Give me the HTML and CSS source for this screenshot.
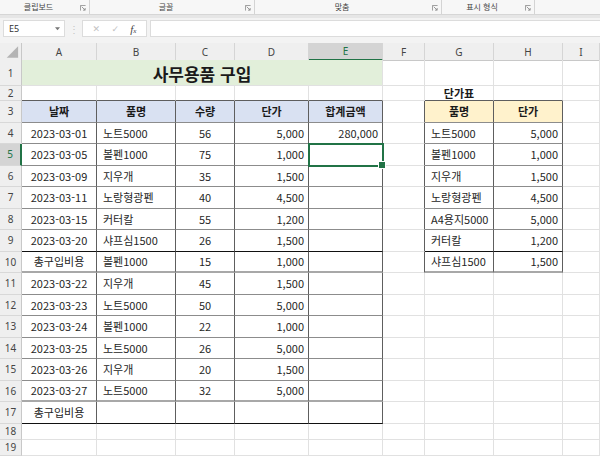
FILE: index.html
```html
<!DOCTYPE html>
<html lang="ko">
<head>
<meta charset="utf-8">
<title>사무용품 구입</title>
<link rel="stylesheet" href="styles.css">
</head>
<body>
<div class="ribbon">
  <div class="grp rg1"><span class="grp-label">클립보드</span><svg class="launch" viewBox="0 0 7 7"><path d="M0.5 6.5V0.5H6.5M2 2L6 6M6 3.5V6H3.5"/></svg></div>
  <div class="grp rg2"><span class="grp-label">글꼴</span><svg class="launch" viewBox="0 0 7 7"><path d="M0.5 6.5V0.5H6.5M2 2L6 6M6 3.5V6H3.5"/></svg></div>
  <div class="grp rg3"><span class="grp-label">맞춤</span><svg class="launch" viewBox="0 0 7 7"><path d="M0.5 6.5V0.5H6.5M2 2L6 6M6 3.5V6H3.5"/></svg></div>
  <div class="grp rg4"><span class="grp-label">표시 형식</span><svg class="launch" viewBox="0 0 7 7"><path d="M0.5 6.5V0.5H6.5M2 2L6 6M6 3.5V6H3.5"/></svg></div>
  <div class="grp rg5"></div>
</div>
<div class="strip"></div>
<div class="fbar">
  <div class="namebox"><span>E5</span><svg class="dd" viewBox="0 0 6 4"><path d="M0 0H6L3 3.5Z"/></svg></div>
  <div class="dots">⋮</div>
  <div class="fxbox"><span class="dis">✕</span><span class="dis">✓</span><span class="fx">f<small>x</small></span></div>
  <div class="finput"></div>
</div>

<div class="sheet">
  <div class="row colhead">
    <div class="ch corner"><svg viewBox="0 0 22 17"><path d="M19 3V15H7Z"/></svg></div>
    <div class="ch">A</div><div class="ch">B</div><div class="ch">C</div><div class="ch">D</div><div class="ch act">E</div><div class="ch">F</div><div class="ch">G</div><div class="ch">H</div><div class="ch">I</div>
  </div>

  <div class="row h26">
    <div class="c rh">1</div>
    <div class="c title">사무용품 구입</div>
    <div class="c"></div><div class="c"></div><div class="c"></div><div class="c"></div>
  </div>

  <div class="row h15">
    <div class="c rh">2</div>
    <div class="c top"></div><div class="c top"></div><div class="c top"></div><div class="c top"></div><div class="c top"></div>
    <div class="c"></div>
    <div class="c top m b">단가표</div><div class="c top"></div>
    <div class="c"></div>
  </div>

  <div class="row h21">
    <div class="c rh">3</div>
    <div class="c t hd m">날짜</div><div class="c t hd m">품명</div><div class="c t hd m">수량</div><div class="c t hd m">단가</div><div class="c t hd m">합계금액</div>
    <div class="c edge"></div>
    <div class="c t hy m">품명</div><div class="c t hy m">단가</div>
    <div class="c"></div>
  </div>

  <div class="row h21">
    <div class="c rh">4</div>
    <div class="c t m">2023-03-01</div><div class="c t l">노트5000</div><div class="c t m">56</div><div class="c t r">5,000</div><div class="c t r">280,000</div>
    <div class="c edge"></div>
    <div class="c t l">노트5000</div><div class="c t r">5,000</div>
    <div class="c"></div>
  </div>

  <div class="row h21">
    <div class="c rh act">5</div>
    <div class="c t m">2023-03-05</div><div class="c t l">볼펜1000</div><div class="c t m">75</div><div class="c t r">1,000</div><div class="c t r sel"></div>
    <div class="c edge"></div>
    <div class="c t l">볼펜1000</div><div class="c t r">1,000</div>
    <div class="c"></div>
  </div>

  <div class="row h21">
    <div class="c rh">6</div>
    <div class="c t m">2023-03-09</div><div class="c t l">지우개</div><div class="c t m">35</div><div class="c t r">1,500</div><div class="c t r"></div>
    <div class="c edge"></div>
    <div class="c t l">지우개</div><div class="c t r">1,500</div>
    <div class="c"></div>
  </div>

  <div class="row h21">
    <div class="c rh">7</div>
    <div class="c t m">2023-03-11</div><div class="c t l">노랑형광펜</div><div class="c t m">40</div><div class="c t r">4,500</div><div class="c t r"></div>
    <div class="c edge"></div>
    <div class="c t l">노랑형광펜</div><div class="c t r">4,500</div>
    <div class="c"></div>
  </div>

  <div class="row h21">
    <div class="c rh">8</div>
    <div class="c t m">2023-03-15</div><div class="c t l">커터칼</div><div class="c t m">55</div><div class="c t r">1,200</div><div class="c t r"></div>
    <div class="c edge"></div>
    <div class="c t l">A4용지5000</div><div class="c t r">5,000</div>
    <div class="c"></div>
  </div>

  <div class="row h21">
    <div class="c rh">9</div>
    <div class="c t bk m">2023-03-20</div><div class="c t bk l">샤프심1500</div><div class="c t bk m">26</div><div class="c t bk r">1,500</div><div class="c t bk r"></div>
    <div class="c edge"></div>
    <div class="c t bk l">커터칼</div><div class="c t bk r">1,200</div>
    <div class="c"></div>
  </div>

  <div class="row h21">
    <div class="c rh">10</div>
    <div class="c t gr m">총구입비용</div><div class="c t gr l">볼펜1000</div><div class="c t gr m">15</div><div class="c t gr r">1,000</div><div class="c t gr r"></div>
    <div class="c edge"></div>
    <div class="c t gr l">샤프심1500</div><div class="c t gr r">1,500</div>
    <div class="c"></div>
  </div>

  <div class="row h21">
    <div class="c rh">11</div>
    <div class="c t m">2023-03-22</div><div class="c t l">지우개</div><div class="c t m">45</div><div class="c t r">1,500</div><div class="c t r"></div>
    <div class="c"></div><div class="c"></div><div class="c"></div><div class="c"></div>
  </div>

  <div class="row h21">
    <div class="c rh">12</div>
    <div class="c t m">2023-03-23</div><div class="c t l">노트5000</div><div class="c t m">50</div><div class="c t r">5,000</div><div class="c t r"></div>
    <div class="c"></div><div class="c"></div><div class="c"></div><div class="c"></div>
  </div>

  <div class="row h21">
    <div class="c rh">13</div>
    <div class="c t m">2023-03-24</div><div class="c t l">볼펜1000</div><div class="c t m">22</div><div class="c t r">1,000</div><div class="c t r"></div>
    <div class="c"></div><div class="c"></div><div class="c"></div><div class="c"></div>
  </div>

  <div class="row h21">
    <div class="c rh">14</div>
    <div class="c t m">2023-03-25</div><div class="c t l">노트5000</div><div class="c t m">26</div><div class="c t r">5,000</div><div class="c t r"></div>
    <div class="c"></div><div class="c"></div><div class="c"></div><div class="c"></div>
  </div>

  <div class="row h21">
    <div class="c rh">15</div>
    <div class="c t m">2023-03-26</div><div class="c t l">지우개</div><div class="c t m">20</div><div class="c t r">1,500</div><div class="c t r"></div>
    <div class="c"></div><div class="c"></div><div class="c"></div><div class="c"></div>
  </div>

  <div class="row h21">
    <div class="c rh">16</div>
    <div class="c t gr m">2023-03-27</div><div class="c t gr l">노트5000</div><div class="c t gr m">32</div><div class="c t gr r">5,000</div><div class="c t gr r"></div>
    <div class="c"></div><div class="c"></div><div class="c"></div><div class="c"></div>
  </div>

  <div class="row h21">
    <div class="c rh">17</div>
    <div class="c t bk m">총구입비용</div><div class="c t bk l"></div><div class="c t bk m"></div><div class="c t bk r"></div><div class="c t bk r"></div>
    <div class="c"></div><div class="c"></div><div class="c"></div><div class="c"></div>
  </div>

  <div class="row h16">
    <div class="c rh">18</div>
    <div class="c"></div><div class="c"></div><div class="c"></div><div class="c"></div><div class="c"></div><div class="c"></div><div class="c"></div><div class="c"></div><div class="c"></div>
  </div>

  <div class="row h16">
    <div class="c rh">19</div>
    <div class="c"></div><div class="c"></div><div class="c"></div><div class="c"></div><div class="c"></div><div class="c"></div><div class="c"></div><div class="c"></div><div class="c"></div>
  </div>
</div>
</body>
</html>
```
FILE: styles.css
```css
* { box-sizing: border-box; }
html, body { margin: 0; padding: 0; }
body {
  width: 600px;
  height: 456px;
  overflow: hidden;
  background: #fff;
  color: #262626;
  font-family: "Noto Sans CJK KR", "Noto Sans", sans-serif;
}

/* ribbon group labels */
.ribbon {
  display: flex;
  height: 15px;
  background: #f7f7f7;
  border-bottom: 1px solid #d6d6d6;
}
.grp {
  display: flex;
  align-items: center;
  border-right: 1px solid #d4d4d4;
  height: 14px;
}
.rg1 { width: 90px; }
.rg2 { width: 165px; }
.rg3 { width: 187px; }
.rg4 { width: 93px; }
.rg5 { flex: 1; border-right: none; }
.grp-label {
  flex: 1;
  text-align: center;
  font-size: 8px;
  line-height: 14px;
  color: #444;
}
.launch {
  width: 6px;
  height: 6px;
  margin: 2px 3px 0 3px;
  fill: none;
  stroke: #8a8a8a;
  stroke-width: 1;
}
.strip { height: 3px; background: #e6e6e6; }

/* formula bar */
.fbar {
  display: flex;
  align-items: flex-start;
  height: 25px;
  padding-top: 2px;
  background: #f3f3f3;
}
.namebox {
  margin-left: 3px;
  width: 62px;
  height: 17px;
  background: #fff;
  border: 1px solid #dcdcdc;
  display: flex;
  align-items: center;
  justify-content: space-between;
  padding: 0 4px 0 5px;
  font-size: 9px;
  color: #333;
  font-family: "Noto Sans", sans-serif;
}
.dd { width: 5px; height: 4px; fill: #777; }
.dots {
  width: 17px;
  height: 17px;
  text-align: center;
  font-size: 10px;
  line-height: 17px;
  color: #c4c4c4;
}
.fxbox {
  width: 65px;
  height: 17px;
  background: #fff;
  border: 1px solid #dcdcdc;
  display: flex;
  align-items: center;
  justify-content: space-around;
  padding: 0 4px;
  font-size: 10px;
}
.dis { color: #c2c2c2; font-family: "DejaVu Sans", sans-serif; font-size: 9px; }
.fx {
  font-family: "Liberation Serif", serif;
  font-style: italic;
  font-size: 11px;
  color: #444;
}
.fx small { font-size: 7px; }
.finput {
  margin-left: 3px;
  flex: 1;
  height: 17px;
  background: #fff;
  border: 1px solid #dcdcdc;
  border-right: none;
}

/* sheet grid */
.row {
  display: grid;
  grid-template-columns: 22px 75px 79px 59px 74px 74px 42px 69px 69px 37px;
}
.colhead { height: 17px; background: #efefef; }
.ch {
  display: flex;
  align-items: center;
  justify-content: center;
  border-right: 1px solid #d5d5d5;
  border-bottom: 1px solid #c8c8c8;
  font-size: 10px;
  color: #444;
  font-family: "Noto Sans", sans-serif;
}
.ch.act {
  background: #d4d4d4;
  color: #217346;
  border-bottom: 2px solid #217346;
}
.corner svg { width: 22px; height: 17px; fill: #b4b4b4; }
.corner { border-right-color: #c8c8c8; }

.h26 { height: 26px; }
.h15 { height: 15px; }
.h21 { height: 21.5px; }
.h16 { height: 16px; }

.c {
  display: flex;
  align-items: center;
  padding: 0 4px;
  border-right: 1px solid #e1e1e1;
  border-bottom: 1px solid #e1e1e1;
  font-size: 11px;
  white-space: nowrap;
  overflow: hidden;
}
.rh {
  justify-content: center;
  padding: 0;
  background: #efefef;
  border-right: 1px solid #c8c8c8;
  border-bottom: 1px solid #d8d8d8;
  font-size: 10px;
  color: #444;
  font-family: "Noto Sans", sans-serif;
}
.rh.act {
  background: #d4d4d4;
  color: #217346;
  border-right: 2px solid #217346;
}

.title {
  grid-column: span 5;
  justify-content: center;
  background: #e2efda;
  font-size: 17px;
  font-weight: bold;
  padding-top: 2px;
  color: #1a1a1a;
}
.m { justify-content: center; }
.r { justify-content: flex-end; padding-right: 4px; }
.l { padding-left: 6px; }
.b { font-weight: bold; color: #1a1a1a; }

.t { border-right-color: #5e5e5e; border-bottom-color: #8c8c8c; }
.top { border-bottom-color: #5e5e5e; }
.edge { border-right-color: #5e5e5e; }
.hd { background: #d9e1f2; font-weight: bold; color: #1a1a1a; }
.hy { background: #fff2cc; font-weight: bold; color: #1a1a1a; }
.bk { border-bottom: 1px solid #111; }
.gr { border-bottom: 2px solid #a8a8a8; }

.sel {
  position: relative;
  overflow: visible;
  outline: 2px solid #217346;
  outline-offset: -1px;
}
.sel::after {
  content: "";
  position: absolute;
  right: -4px;
  bottom: -4px;
  width: 6px;
  height: 6px;
  background: #217346;
  border: 1px solid #fff;
  z-index: 2;
}
```
